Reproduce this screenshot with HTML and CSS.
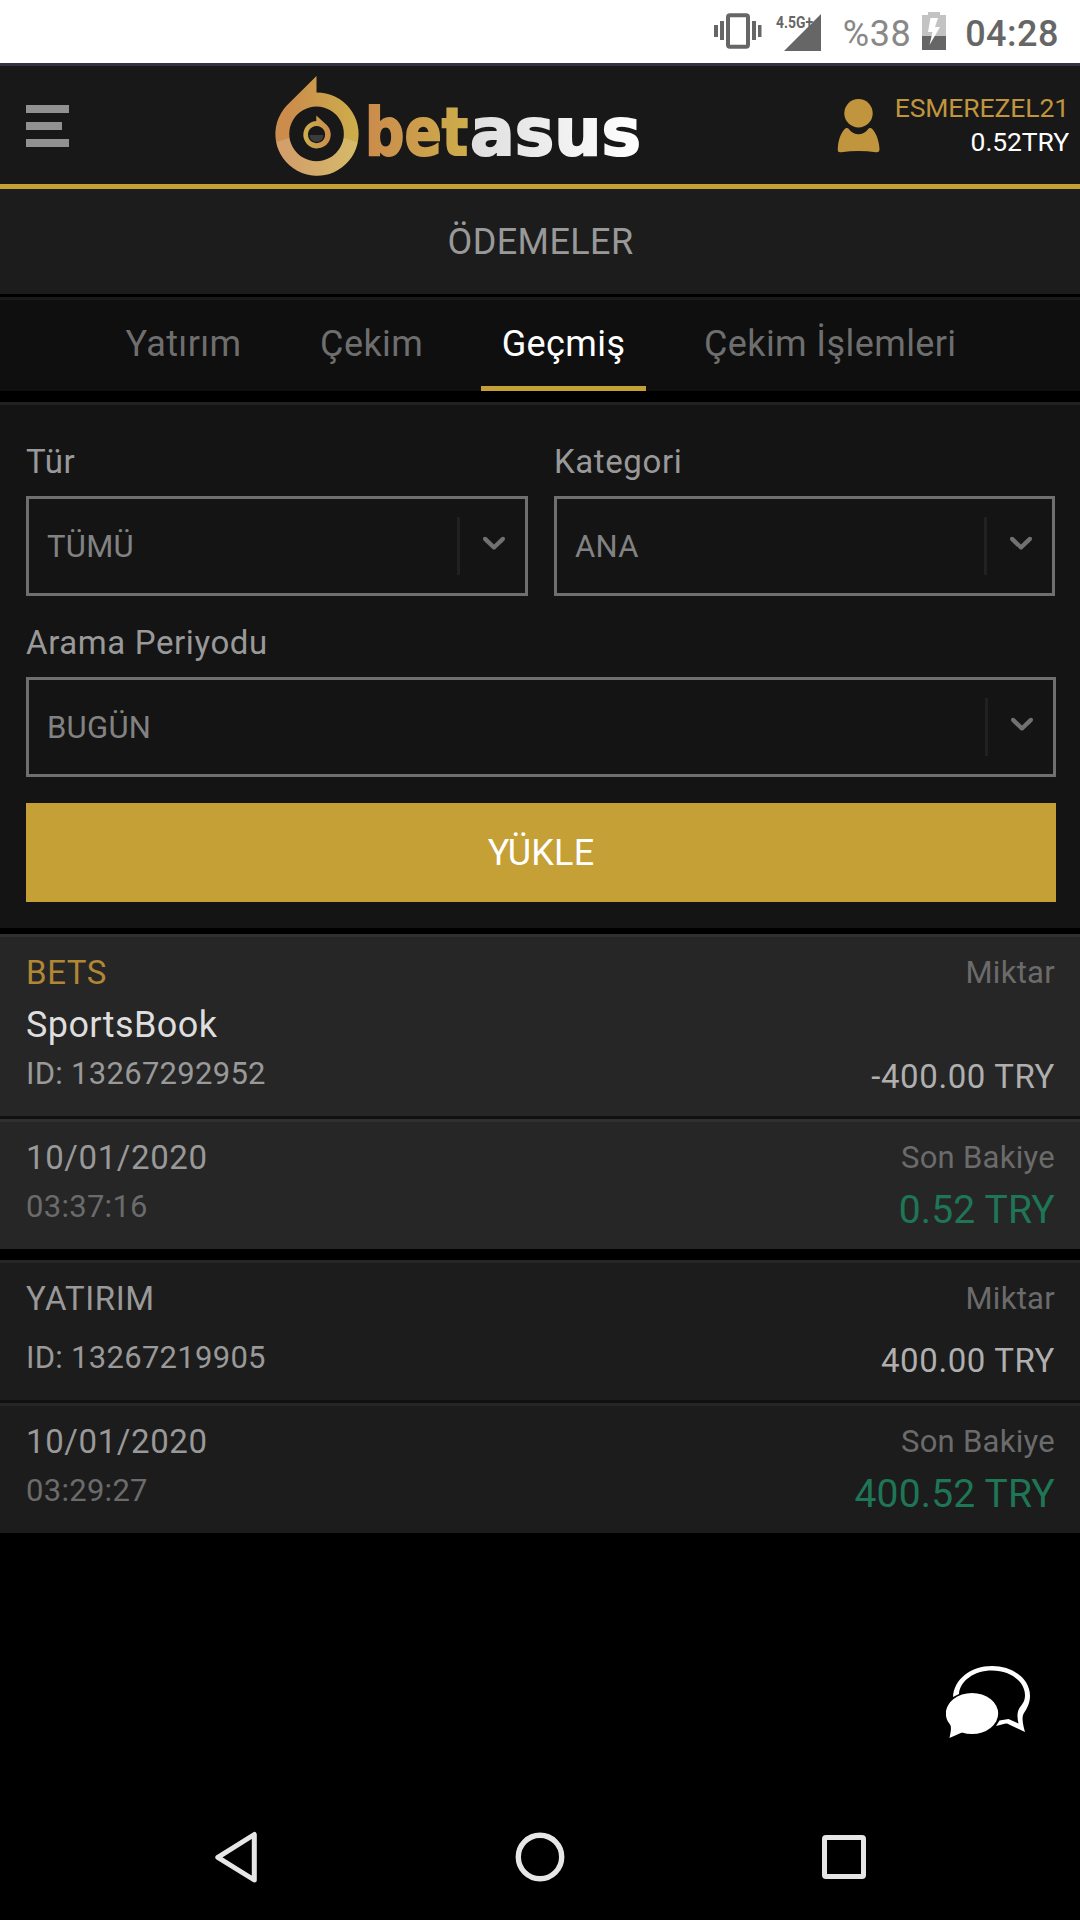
FILE: index.html
```html
<!DOCTYPE html>
<html lang="tr">
<head>
<meta charset="utf-8">
<title>Ödemeler</title>
<link rel="stylesheet" href="styles.css">
</head>
<body>
<div class="statusbar">
  <svg class="status-icon status-icon--vibrate" width="48" height="36" viewBox="0 0 48 36">
    <rect x="14" y="2.200" width="20" height="31.600" rx="2" fill="none" stroke="#666" stroke-width="4"/>
    <path fill="#666" d="M0 12h4v12H0zM6 8h4v19H6zM38 8h4v19h-4zM44 12h3.500v12H44z"/>
  </svg>
  <svg class="status-icon status-icon--signal" width="46" height="40" viewBox="0 0 46 40">
    <path fill="#666" d="M45 2v37H8z"/>
    <path fill="#fff" d="M31 0h8v7l-5 6z"/>
    <text class="network" x="0" y="16" textLength="37" lengthAdjust="spacingAndGlyphs">4.5G+</text>
  </svg>
  <span class="battery-level">%38</span>
  <svg class="status-icon status-icon--battery" width="24" height="38" viewBox="0 0 24 38">
    <path fill="#c3c3c3" d="M6 0h12v3h6v21H0V3h6z"/>
    <path fill="#666" d="M0 24h24v14H0z"/>
    <path fill="#fff" d="M8.500 6h7.500l-3 9h5L7.500 33l3-13H6z"/>
  </svg>
  <span class="clock">04:28</span>
</div>

<header class="header">
  <button class="menu" aria-label="Menü">
    <span class="menu-bar"></span>
    <span class="menu-bar menu-bar--short"></span>
    <span class="menu-bar"></span>
  </button>
  <svg class="logo" width="376" height="112" viewBox="270 68 376 112">
    <defs>
      <linearGradient id="ring" x1="0" x2="1"><stop offset=".15" stop-color="#cb8c4c"/><stop offset="1" stop-color="#cdae4b"/></linearGradient>
      <linearGradient id="core" x1="0" x2="1"><stop offset="0" stop-color="#cdae4b"/><stop offset="1" stop-color="#cb8c4c"/></linearGradient>
      <linearGradient id="gold" gradientUnits="userSpaceOnUse" x1="369" x2="470" y1="0" y2="0"><stop offset="0" stop-color="#cb8c4c"/><stop offset="1" stop-color="#cdae4b"/></linearGradient>
      <linearGradient id="silver" gradientUnits="userSpaceOnUse" x1="470" x2="640" y1="0" y2="0"><stop offset="0" stop-color="#dedede"/><stop offset="1" stop-color="#fff"/></linearGradient>
      <clipPath id="ring-clip"><path clip-rule="evenodd" d="M316.500 76v16.500A41.600 41.600 0 1 1 286.500 105.800zM316.500 106.600a27.300 27.300 0 1 0 .1 0z"/></clipPath>
    </defs>
    <path fill="url(#ring)" fill-rule="evenodd" d="M316.500 76v16.500A41.600 41.600 0 1 1 286.500 105.800zM316.500 106.600a27.300 27.300 0 1 0 .1 0z"/>
    <path clip-path="url(#ring-clip)" fill="#fff" fill-opacity=".17" d="M270 144l46.500-15 46.500 15v40h-93z"/>
    <path fill="url(#core)" fill-rule="evenodd" d="M316.300 115.500l10.700 9.800a13.700 13.700 0 1 1-10.700-4.300zM316.500 126a8.600 8.600 0 1 0 .1 0z"/>
    <path fill="#3c3c3e" d="M309.500 135h14a7 7 0 0 1-14 0z"/>
    <text class="wordmark" x="365" y="155" textLength="103" lengthAdjust="spacingAndGlyphs" fill="url(#gold)" stroke="url(#gold)">bet</text>
    <text class="wordmark" x="470" y="155" textLength="171" lengthAdjust="spacingAndGlyphs" fill="url(#silver)" stroke="url(#silver)">asus</text>
  </svg>
  <div class="account">
    <svg class="account-icon" width="44" height="56" viewBox="0 0 44 56">
      <circle cx="22.500" cy="15.200" r="14.200" fill="#c1953e"/>
      <path fill="#c1953e" d="M8.500 31.200C10 29.500 12 29.800 13 31.200 18 38 27 38 32 31.200 33 29.800 35 29.500 36.500 31.200 41 36.500 43 43.500 43.500 51 43.500 53.500 42.500 54.500 40 54.200 28 52.500 17 52.500 5 54.200 2.500 54.500 1.500 53.500 1.800 51 2 43.500 4 36.500 8.500 31.200z"/>
    </svg>
    <div class="account-text">
      <span class="account-name">ESMEREZEL21</span>
      <span class="account-balance">0.52TRY</span>
    </div>
  </div>
</header>

<h1 class="title">ÖDEMELER</h1>

<nav class="tabs">
  <a class="tab">Yatırım</a>
  <a class="tab">Çekim</a>
  <a class="tab tab--active">Geçmiş</a>
  <a class="tab">Çekim İşlemleri</a>
</nav>

<form class="filters">
  <div class="field">
    <span class="label">Tür</span>
    <div class="select">
      <span class="select-value">TÜMÜ</span>
      <svg class="select-arrow" width="38" height="38" viewBox="0 0 20 20"><path d="M4.516 7.548c0.436-0.446 1.043-0.481 1.576 0l3.908 3.747 3.908-3.747c0.533-0.481 1.141-0.446 1.574 0 0.436 0.445 0.408 1.197 0 1.615-0.406 0.418-4.695 4.502-4.695 4.502-0.217 0.223-0.502 0.335-0.787 0.335s-0.570-0.112-0.789-0.335c0 0-4.287-4.084-4.695-4.502s-0.436-1.170 0-1.615z"/></svg>
    </div>
  </div>
  <div class="field">
    <span class="label">Kategori</span>
    <div class="select">
      <span class="select-value">ANA</span>
      <svg class="select-arrow" width="38" height="38" viewBox="0 0 20 20"><path d="M4.516 7.548c0.436-0.446 1.043-0.481 1.576 0l3.908 3.747 3.908-3.747c0.533-0.481 1.141-0.446 1.574 0 0.436 0.445 0.408 1.197 0 1.615-0.406 0.418-4.695 4.502-4.695 4.502-0.217 0.223-0.502 0.335-0.787 0.335s-0.570-0.112-0.789-0.335c0 0-4.287-4.084-4.695-4.502s-0.436-1.170 0-1.615z"/></svg>
    </div>
  </div>
  <div class="field field--wide">
    <span class="label">Arama Periyodu</span>
    <div class="select">
      <span class="select-value">BUGÜN</span>
      <svg class="select-arrow" width="38" height="38" viewBox="0 0 20 20"><path d="M4.516 7.548c0.436-0.446 1.043-0.481 1.576 0l3.908 3.747 3.908-3.747c0.533-0.481 1.141-0.446 1.574 0 0.436 0.445 0.408 1.197 0 1.615-0.406 0.418-4.695 4.502-4.695 4.502-0.217 0.223-0.502 0.335-0.787 0.335s-0.570-0.112-0.789-0.335c0 0-4.287-4.084-4.695-4.502s-0.436-1.170 0-1.615z"/></svg>
    </div>
  </div>
  <button class="submit" type="button">YÜKLE</button>
</form>

<main class="history">
  <article class="entry entry--bet">
    <div class="entry-row">
      <div class="col">
        <span class="kind">BETS</span>
        <span class="product">SportsBook</span>
        <span class="small">ID: 13267292952</span>
      </div>
      <div class="col col--right">
        <span class="caption">Miktar</span>
        <span class="amount">-400.00 TRY</span>
      </div>
    </div>
    <div class="entry-row">
      <div class="col">
        <span class="date">10/01/2020</span>
        <span class="small small--dim">03:37:16</span>
      </div>
      <div class="col col--right">
        <span class="caption">Son Bakiye</span>
        <span class="balance">0.52 TRY</span>
      </div>
    </div>
  </article>
  <article class="entry">
    <div class="entry-row">
      <div class="col col--spread">
        <span class="kind">YATIRIM</span>
        <span class="small">ID: 13267219905</span>
      </div>
      <div class="col col--right">
        <span class="caption">Miktar</span>
        <span class="amount">400.00 TRY</span>
      </div>
    </div>
    <div class="entry-row">
      <div class="col">
        <span class="date">10/01/2020</span>
        <span class="small small--dim">03:29:27</span>
      </div>
      <div class="col col--right">
        <span class="caption">Son Bakiye</span>
        <span class="balance">400.52 TRY</span>
      </div>
    </div>
  </article>
</main>

<button class="chat" aria-label="Canlı destek">
  <svg width="86" height="74" viewBox="0 0 86 74">
    <path fill="#fff" d="M7 32C8 14 25 1 46 1 67 1 84 14 84 31 84 38 81 43.500 78 48 75.500 51.500 76.500 58 79 67L61 58.500C58 58.500 54 60 50 61L53.500 55.500 62.500 54 72.500 58.500C71 52 71 47 73.500 43 77 38 79 36 79 30 79 17 65 5.500 46 5.500 28 5.500 14 16 13 29z"/>
    <ellipse cx="26" cy="48.500" rx="26.200" ry="20.500" fill="#fff"/>
    <path fill="#fff" d="M3 57C6 61 5 66 3.500 73L17 67 20 58z"/>
  </svg>
</button>

<footer class="navbar">
  <svg width="44" height="54" viewBox="0 0 44 54"><path d="M40.300 4.500v45.500L3.800 27.300z" fill="none" stroke="#e6e6e6" stroke-width="5" stroke-linejoin="round"/></svg>
  <svg width="50" height="50" viewBox="0 0 50 50"><circle cx="25" cy="25" r="21.700" fill="none" stroke="#e6e6e6" stroke-width="5.400"/></svg>
  <svg width="44" height="44" viewBox="0 0 44 44"><rect x="2.500" y="2.500" width="39" height="39" rx="1.500" fill="none" stroke="#e6e6e6" stroke-width="5"/></svg>
</footer>
</body>
</html>
```
FILE: styles.css
```css
* {
  box-sizing: border-box;
}

body {
  margin: 0;
  width: 1080px;
  height: 1920px;
  display: flex;
  flex-direction: column;
  background: #000;
  color: #999;
  font-family: Roboto, sans-serif;
  overflow: hidden;
  position: relative;
}

button {
  font: inherit;
  border: 0;
  padding: 0;
  background: none;
}

svg {
  display: block;
  flex: none;
}

/* Device status bar */
.statusbar {
  height: 66px;
  flex: none;
  display: flex;
  justify-content: flex-end;
  align-items: flex-start;
  padding: 12px 21px 0 0;
  background: #fff;
  border-bottom: 3px solid #30323f;
}

.status-icon--vibrate {
  margin: 1px 14px 0 0;
}

.status-icon--signal {
  margin: 0 21px 0 0;
}

.network {
  font-size: 17px;
  font-weight: 700;
  fill: #666;
}

.battery-level,
.clock {
  font-size: 36px;
  line-height: 44px;
  letter-spacing: .5px;
}

.battery-level {
  color: #888;
  margin-right: 11px;
}

.clock {
  color: #666;
  font-weight: 500;
  margin-left: 19px;
}

/* Site header */
.header {
  height: 123px;
  flex: none;
  display: flex;
  align-items: flex-start;
  padding: 2px 11px 0 26px;
  background: #181818;
  border-bottom: 5px solid #c4a037;
}

.menu {
  width: 43px;
  margin-top: 37px;
  display: flex;
  flex-direction: column;
  gap: 9px;
}

.menu-bar {
  height: 8px;
  background: #919191;
}

.menu-bar--short {
  width: 36px;
}

.logo {
  margin-left: 201px;
}

.wordmark {
  font-family: "DejaVu Sans", sans-serif;
  font-size: 66px;
  font-weight: 700;
  stroke-width: 2px;
  paint-order: stroke;
}

.account {
  margin: 29px 0 0 auto;
  display: flex;
}

.account-icon {
  margin: 1px 15px 0 0;
}

.account-text {
  display: flex;
  flex-direction: column;
  align-items: flex-end;
  font-size: 26.500px;
  line-height: 34px;
  margin-top: -6px;
}

.account-name {
  color: #c1953e;
  letter-spacing: -.1px;
}

.account-balance {
  color: #fff;
  letter-spacing: -.1px;
}

.title {
  height: 105px;
  flex: none;
  margin: 0;
  padding: 1px 0 0 1px;
  background: #1c1c1c;
  text-align: center;
  font-size: 36px;
  font-weight: 400;
  line-height: 105px;
  letter-spacing: .4px;
}

/* Tabs */
.tabs {
  height: 94px;
  flex: none;
  margin-top: 3px;
  padding-left: 2px;
  display: flex;
  justify-content: center;
  gap: 36.500px;
  background: #0f0f0f;
  border-top: 3px solid #1a1a1a;
}

.tab {
  padding: 1px 21px 0;
  color: #6e6e6e;
  font-size: 36px;
  line-height: 87px;
  letter-spacing: .4px;
}

.tab--active {
  color: #fff;
  border-bottom: 5px solid #c4a037;
}

/* Filter form */
.filters {
  margin-top: 11px;
  height: 526px;
  flex: none;
  display: grid;
  grid-template-columns: 502px 501px;
  align-content: start;
  column-gap: 26px;
  padding: 10px 24px 26px 26px;
  background: #141414;
  border-top: 3px solid #212121;
}

.field--wide,
.submit {
  grid-column: 1 / -1;
  width: 1030px;
}

.label {
  display: block;
  height: 81px;
  padding-top: 26px;
  font-size: 33px;
  line-height: 41px;
  letter-spacing: .6px;
}

.select {
  height: 100px;
  display: flex;
  align-items: center;
  padding: 0 12px 0 18px;
  border: 3px solid #6f6f6f;
}

.select-value {
  flex: 1;
  color: #828282;
  font-size: 31px;
  letter-spacing: .3px;
}

.select-arrow {
  box-sizing: content-box;
  padding: 6px 0 14px 15px;
  border-left: 3px solid #212121;
  fill: #717171;
}

.submit {
  margin-top: 26px;
  height: 99px;
  background: #c4a037;
  color: #fff;
  font-size: 36px;
  letter-spacing: .2px;
}

/* Transaction history */
.history {
  margin-top: 6px;
  display: flex;
  flex-direction: column;
  gap: 11px;
}

.entry-row {
  display: flex;
  justify-content: space-between;
  padding: 10px 25px 13px 26px;
  background: #1c1c1c;
  border-top: 3px solid #262626;
}

.entry-row:first-child {
  padding-bottom: 19px;
  border-bottom: 3px solid #101010;
}

.entry--bet .entry-row {
  background-color: #262626;
  border-top-color: #303030;
}

.col {
  display: flex;
  flex-direction: column;
}

.col--right {
  align-items: flex-end;
  justify-content: space-between;
}

.col--spread {
  gap: 10px;
}

.kind,
.date {
  font-size: 33px;
  line-height: 52px;
  letter-spacing: .6px;
}

.entry--bet .kind {
  color: #b18735;
}

.product {
  color: #dedede;
  font-size: 36px;
  line-height: 52px;
  letter-spacing: .4px;
}

.small,
.caption {
  font-size: 31px;
  line-height: 46px;
  letter-spacing: .28px;
}

.small--dim,
.caption {
  color: #6b6b6b;
}

.caption {
  line-height: 52px;
}

.amount {
  color: #afafaf;
  font-size: 33px;
  line-height: 41px;
  letter-spacing: .6px;
}

.balance {
  color: #1e7656;
  font-size: 39px;
  line-height: 52px;
  letter-spacing: .2px;
}

/* Floating chat launcher */
.chat {
  position: absolute;
  left: 946px;
  top: 1665px;
}

/* Device navigation bar */
.navbar {
  height: 126px;
  flex: none;
  margin-top: auto;
  display: flex;
  align-items: center;
  justify-content: space-between;
  padding: 0 214px;
}
```
